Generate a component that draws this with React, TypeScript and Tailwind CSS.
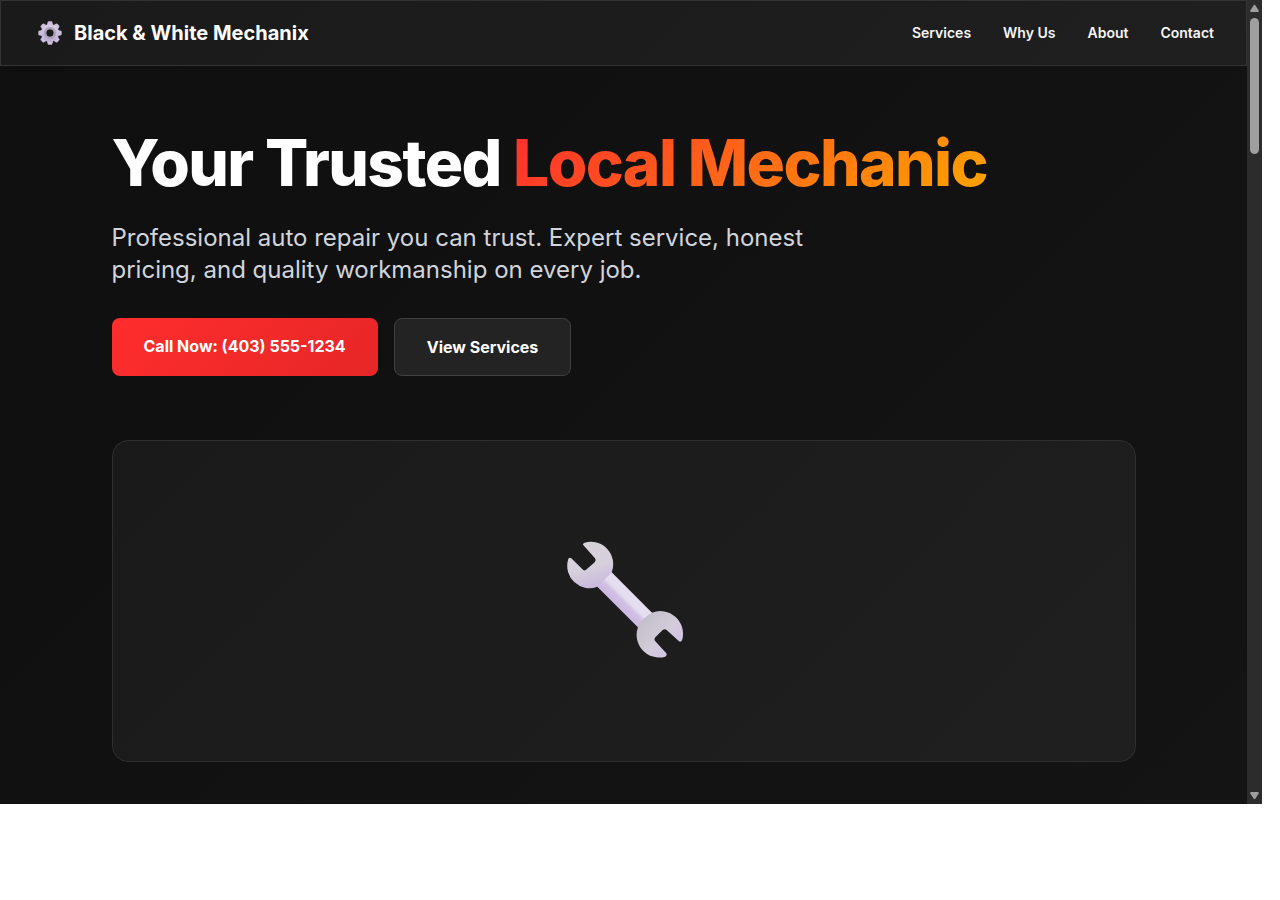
interface NavItem {
  label: string;
  href: string;
}

const NAV_ITEMS: NavItem[] = [
  { label: 'Services', href: '#services' },
  { label: 'Why Us', href: '#why-us' },
  { label: 'About', href: '#about' },
  { label: 'Contact', href: '#contact' },
];

const GEAR_TEETH = [0, 45, 90, 135, 180, 225, 270, 315];

function GearIcon() {
  return (
    <svg className="w-6 h-6" viewBox="0 0 72 72" aria-hidden="true">
      <defs>
        <linearGradient id="gear" x1="0" y1="0" x2="0" y2="1">
          <stop offset="0" stopColor="#d3cadf" />
          <stop offset="1" stopColor="#c0b0d6" />
        </linearGradient>
      </defs>
      {GEAR_TEETH.map((angle) => (
        <path
          key={angle}
          d="M26 16 L29 3 Q30 1 32 1 H40 Q42 1 43 3 L46 16 Z"
          fill="#cbbfdb"
          transform={`rotate(${angle} 36 36)`}
        />
      ))}
      <circle cx="36" cy="36" r="19" fill="none" stroke="url(#gear)" strokeWidth="16" />
      <circle cx="36" cy="36" r="15" fill="none" stroke="#ab9fba" strokeWidth="6" />
    </svg>
  );
}

function WrenchIcon() {
  return (
    <svg className="w-30 h-30" viewBox="40 33 360 360" aria-hidden="true">
      <defs>
        <linearGradient id="head-top" x1="0.3" y1="0" x2="0.6" y2="1">
          <stop offset="0" stopColor="#d5d2d8" />
          <stop offset="0.55" stopColor="#d6d0dc" />
          <stop offset="1" stopColor="#c8b8dc" />
        </linearGradient>
        <linearGradient id="head-bottom" x1="0.1" y1="0.2" x2="0.8" y2="0.8">
          <stop offset="0" stopColor="#c3bfca" />
          <stop offset="0.6" stopColor="#d3ccda" />
          <stop offset="1" stopColor="#d3c4e4" />
        </linearGradient>
        <linearGradient id="handle" gradientUnits="userSpaceOnUse" x1="198" y1="231" x2="243" y2="186">
          <stop offset="0" stopColor="#cab9e1" />
          <stop offset="0.4" stopColor="#d0c1e3" />
          <stop offset="0.6" stopColor="#e5def0" />
          <stop offset="1" stopColor="#e4deed" />
        </linearGradient>
      </defs>
      <path
        d="M97 44 Q96 40 102 38 A67 67 0 0 1 184 124 Q180 165 138 171 A67 67 0 0 1 52 90 Q54 80 62 85 L97 119 Q102 124 108 118 L132 97 Q137 91 133 85 Z"
        fill="url(#head-top)"
      />
      <path d="M183 127 L310 254 L270 300 L140 170 Q150 163 160 150 Q172 140 183 127 Z" fill="url(#handle)" />
      <path
        d="M304 248 A68 68 0 0 1 395 328 Q393 338 385 334 L348 300 Q342 295 336 300 L314 322 Q309 328 314 334 L347 370 Q350 375 344 380 A68 68 0 0 1 262 291 Q275 262 304 248 Z"
        fill="url(#head-bottom)"
      />
    </svg>
  );
}

function Scrollbar() {
  return (
    <div className="w-[15px] shrink-0 bg-[#2c2c2c] flex flex-col items-center py-1" aria-hidden="true">
      <svg className="w-[9px] h-2" viewBox="0 0 9 8">
        <path d="M3.5 1.5 Q4.5 0 5.5 1.5 L8.7 6.5 Q9 8 8 8 H1 Q0 8 0.3 6.5 Z" fill="#9f9f9f" />
      </svg>
      <div className="w-[9px] h-[136px] mt-1.5 rounded-full bg-[#9f9f9f]" />
      <svg className="w-[9px] h-2 mt-auto" viewBox="0 0 9 8">
        <path d="M3.5 6.5 Q4.5 8 5.5 6.5 L8.7 1.5 Q9 0 8 0 H1 Q0 0 0.3 1.5 Z" fill="#9f9f9f" />
      </svg>
    </div>
  );
}

function Header() {
  return (
    <header className="flex items-center justify-between px-8 h-[66px] border border-[#333333] bg-linear-135 from-[#1a1a1a] to-[#1f1f1f]">
      {/* Brand */}
      <a href="#home" className="flex items-center gap-2 text-xl font-bold text-white">
        <span className="w-[33px] flex justify-center">
          <GearIcon />
        </span>
        Black &amp; White Mechanix
      </a>

      {/* Nav */}
      <nav className="flex gap-8">
        {NAV_ITEMS.map((item) => (
          <a key={item.href} href={item.href} className="text-sm font-semibold text-[#f5f5f5]">
            {item.label}
          </a>
        ))}
      </nav>
    </header>
  );
}

function Hero() {
  return (
    <section className="max-w-[1024px] mx-auto pt-16 pb-[42px]">
      <h1 className="text-[64px] leading-[66px] font-extrabold tracking-tight text-white mb-[26px]">
        Your Trusted{' '}
        <span className="bg-linear-135/srgb from-[#ff2d2d] to-[#ffa500] bg-clip-text text-transparent">
          Local Mechanic
        </span>
      </h1>
      <p className="max-w-[700px] text-2xl leading-8 text-[#d1d5db] mb-8">
        Professional auto repair you can trust. Expert service, honest pricing, and quality
        workmanship on every job.
      </p>

      {/* Actions */}
      <div className="flex gap-4 font-bold text-white">
        <a
          href="tel:+14035551234"
          className="px-8 py-4 rounded-lg bg-linear-135 from-[#ff2d2d] to-[#e62626]"
        >
          Call Now: (403) 555-1234
        </a>
        <a href="#services" className="px-8 py-4 rounded-lg border border-[#404040] bg-[#232323]">
          View Services
        </a>
      </div>

      <div className="mt-16 h-[322px] flex items-center justify-center rounded-2xl border border-[#2e2e2e] bg-linear-135 from-[#1a1a1a] to-[#1f1f1f]">
        <WrenchIcon />
      </div>
    </section>
  );
}

export default function App() {
  return (
    <div className="min-h-screen bg-white pr-[18px] font-[Inter,sans-serif]">
      <div className="flex">
        <main className="flex-1 min-w-0 bg-linear-135 from-[#0f0f0f] to-[#141414]">
          <Header />
          <Hero />
        </main>
        <Scrollbar />
      </div>
    </div>
  );
}
